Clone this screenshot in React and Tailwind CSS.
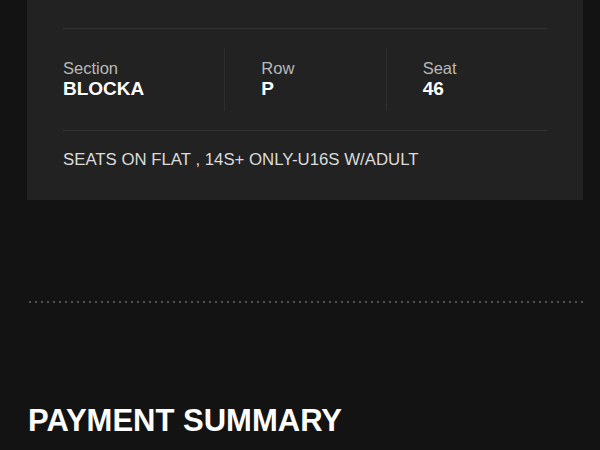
const seatInfo = [
    { label: 'Section', value: 'BLOCKA' },
    { label: 'Row', value: 'P' },
    { label: 'Seat', value: '46' },
];

const App = () => {
    return (
        <div className="min-h-[450px] bg-[#131313] font-['Liberation_Sans',Arial,sans-serif] overflow-hidden">
            <div className="ml-[27px] mr-[17px]">
                <div className="bg-[#222222] px-9 pt-[28px] pb-[30px]">
                    <div className="h-px bg-[#343434]" />
                    <div className="grid grid-cols-3 py-[19px]">
                        {seatInfo.map((item, i) => (
                            <div
                                key={item.label}
                                className={
                                    i === 0
                                        ? 'flex flex-col justify-center h-[63px]'
                                        : 'flex flex-col justify-center h-[63px] pl-9 border-l border-[#2e2e2e]'
                                }
                            >
                                <span className="text-[16.5px] leading-[20px] text-[#b9b9b9] -mt-[2px]">{item.label}</span>
                                <span className="text-[19px] leading-[22px] font-bold text-white">{item.value}</span>
                            </div>
                        ))}
                    </div>
                    <div className="h-px bg-[#343434]" />
                    <p className="mt-[19px] text-[16.8px] leading-[20px] text-[#dcdcdc]">
                        SEATS ON FLAT , 14S+ ONLY-U16S W/ADULT
                    </p>
                </div>
            </div>
            <div className="ml-[27px] mr-[17px] mt-[100px] h-[4px] bg-[radial-gradient(circle,#505050_1px,transparent_1.6px)] bg-[length:6px_4px]" />
            <h2 className="mx-[28px] mt-[99px] text-[31px] leading-[36px] font-bold text-white">PAYMENT SUMMARY</h2>
        </div>
    );
};

export default App;
